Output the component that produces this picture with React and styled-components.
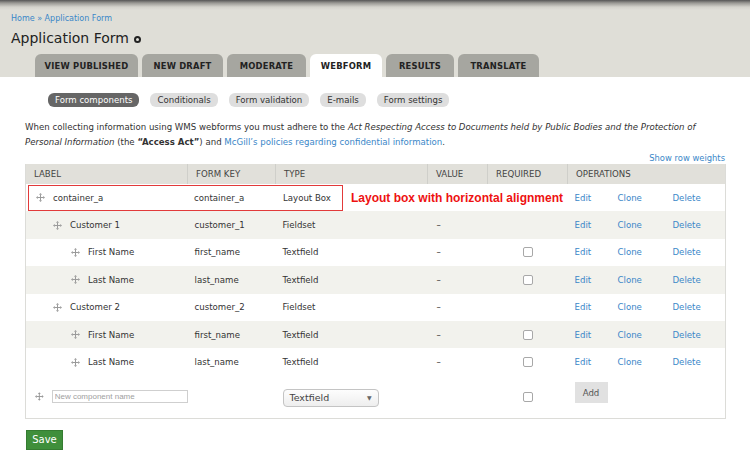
import React from 'react';
import styled, { createGlobalStyle } from 'styled-components';

const GlobalStyle = createGlobalStyle`
	body {
		margin: 0;
		background: #fff;
		font-family: "DejaVu Sans", Verdana, sans-serif;
		color: #333;
	}
`;

const Page = styled.div`
	width: 750px;
	height: 473px;
	overflow: hidden;
`;

const Header = styled.div`
	background: linear-gradient(to bottom, #555 0px, #9a9994 3px, #d4d3cc 7px, #dfded7 10px);
	padding: 13px 0 0 11px;
`;

const Breadcrumb = styled.div`
	font-size: 8px;
	line-height: 12px;
	color: #3a87c8;
`;

const Title = styled.h1`
	display: flex;
	align-items: center;
	gap: 5px;
	margin: 3px 0 0;
	font-size: 14px;
	font-weight: normal;
	line-height: 20px;
	color: #222;
`;

const Ring = styled.span`
	width: 3px;
	height: 3px;
	border: 2px solid #222;
	border-radius: 50%;
	margin-top: 3px;
`;

const Tabs = styled.div`
	display: flex;
	gap: 4px;
	margin-top: 6px;
	padding-left: 24px;
`;

const Tab = styled.div`
	height: 23px;
	display: flex;
	align-items: center;
	justify-content: center;
	box-sizing: border-box;
	border-radius: 6px 6px 0 0;
	background: ${(p) => (p.$active ? '#fff' : '#a6a6a0')};
	font-size: 8.4px;
	font-weight: bold;
	letter-spacing: 0.2px;
	color: #222;
	width: ${(p) => p.$w}px;
`;

const Content = styled.div`
	padding: 0 25px;
`;

const Pills = styled.div`
	display: flex;
	gap: 11px;
	margin-top: 16px;
	padding-left: 23px;
`;

const Pill = styled.div`
	height: 14px;
	padding: 0 7px;
	display: flex;
	align-items: center;
	border-radius: 6px;
	background: ${(p) => (p.$active ? '#666' : '#dedede')};
	color: ${(p) => (p.$active ? '#fff' : '#333')};
	font-size: 8.6px;
`;

const Intro = styled.p`
	margin: 13px 0 0;
	font-size: 8.6px;
	line-height: 15px;
	color: #333;

	em {
		font-style: italic;
	}

	a {
		color: #3a87c8;
		text-decoration: none;
	}
`;

const RowWeights = styled.div`
	text-align: right;
	font-size: 8.4px;
	line-height: 12px;
	margin-top: 2px;
	color: #3a87c8;
`;

const Table = styled.table`
	width: 700px;
	border-collapse: collapse;
	table-layout: fixed;
	border: 1px solid #dcdcd8;
	border-top: 0;
	font-size: 8.6px;
	color: #333;
`;

const Th = styled.th`
	height: 20px;
	padding: 0 0 0 8px;
	background: #e1e0da;
	border-left: 1px solid #cfcfca;
	font-weight: normal;
	text-align: left;
	color: #444;
	&:first-child {
		border-left: 0;
	}
`;

const Tr = styled.tr`
	background: ${(p) => (p.$alt ? '#f2f2ed' : '#fff')};
`;

const Td = styled.td`
	height: ${(p) => p.$h ?? 27.4}px;
	padding: 0 0 0 ${(p) => p.$pl ?? 7}px;
	vertical-align: middle;
	white-space: nowrap;
`;

const LabelCell = styled.div`
	display: flex;
	align-items: center;
	gap: 8px;
	padding-left: ${(p) => p.$level * 18 + 9}px;
`;

const Annotated = styled.div`
	display: flex;
	align-items: center;
`;

const RedBox = styled.div`
	display: flex;
	align-items: center;
	width: 315px;
	height: 26px;
	box-sizing: border-box;
	border: 1.5px solid #e23a3a;
	margin-left: 2px;
`;

const BoxCol = styled.div`
	width: ${(p) => p.$w}px;
	padding-left: ${(p) => p.$pl ?? 0}px;
	box-sizing: border-box;
	display: flex;
	align-items: center;
	gap: 8px;
`;

const Note = styled.span`
	margin-left: 8px;
	font-family: "Liberation Sans", Arial, sans-serif;
	font-size: 12px;
	font-weight: bold;
	color: #ee1111;
`;

const Ops = styled.div`
	display: flex;
	align-items: center;
`;

const OpLink = styled.a`
	width: ${(p) => p.$w}px;
	color: #3a87c8;
	text-decoration: none;
`;

const Check = styled.span`
	display: inline-block;
	width: 8px;
	height: 8px;
	border: 1px solid #a8a8a8;
	border-radius: 2px;
	background: #fff;
	margin-left: 35px;
	margin-top: 2px;
`;

const NameInput = styled.input`
	width: 141px;
	height: 13px;
	box-sizing: border-box;
	border: 1px solid #cfcfcf;
	padding: 0 2px;
	font-family: "Liberation Sans", Arial, sans-serif;
	font-size: 8px;
	color: #999;
	&::placeholder {
		color: #a0a0a0;
	}
`;

const SelectBox = styled.div`
	width: 96px;
	height: 18px;
	box-sizing: border-box;
	border: 1px solid #c4c4c4;
	border-radius: 4px;
	background: linear-gradient(#fdfdfd, #eeeeee);
	display: flex;
	align-items: center;
	justify-content: space-between;
	padding: 0 6px;
	font-size: 9.5px;
	color: #444;
	margin-top: 2px;

	span:last-child {
		font-size: 6px;
		color: #666;
	}
`;

const AddButton = styled.div`
	width: 33px;
	height: 21px;
	background: #e1e1e1;
	color: #555;
	font-size: 8.6px;
	display: flex;
	align-items: center;
	justify-content: center;
	margin-bottom: 8px;
`;

const SaveButton = styled.div`
	width: 37px;
	height: 20px;
	margin: 11px 0 0 1px;
	background: #3f8f3b;
	border: 1px solid #357c31;
	box-sizing: border-box;
	color: #fff;
	font-size: 10px;
	display: flex;
	align-items: center;
	justify-content: center;
`;

const Drag = () => (
	<svg width="9" height="9" viewBox="0 0 9 9" fill="#9a9a9a">
		<rect x="4" y="1.5" width="1" height="6" />
		<rect x="1.5" y="4" width="6" height="1" />
		<path d="M4.5 0 L6 1.8 H3 Z" />
		<path d="M4.5 9 L6 7.2 H3 Z" />
		<path d="M0 4.5 L1.8 3 V6 Z" />
		<path d="M9 4.5 L7.2 3 V6 Z" />
	</svg>
);

const tabs = [
	{ label: 'VIEW PUBLISHED', w: 103 },
	{ label: 'NEW DRAFT', w: 81 },
	{ label: 'MODERATE', w: 79 },
	{ label: 'WEBFORM', w: 72, active: true },
	{ label: 'RESULTS', w: 68 },
	{ label: 'TRANSLATE', w: 81 },
];

const pills = ['Form components', 'Conditionals', 'Form validation', 'E-mails', 'Form settings'];

const rows = [
	{ label: 'Customer 1', key: 'customer_1', type: 'Fieldset', level: 1 },
	{ label: 'First Name', key: 'first_name', type: 'Textfield', level: 2, req: true },
	{ label: 'Last Name', key: 'last_name', type: 'Textfield', level: 2, req: true },
	{ label: 'Customer 2', key: 'customer_2', type: 'Fieldset', level: 1 },
	{ label: 'First Name', key: 'first_name', type: 'Textfield', level: 2, req: true },
	{ label: 'Last Name', key: 'last_name', type: 'Textfield', level: 2, req: true },
];

const Operations = () => (
	<Ops>
		<OpLink $w={43}>Edit</OpLink>
		<OpLink $w={55}>Clone</OpLink>
		<OpLink $w={50}>Delete</OpLink>
	</Ops>
);

const App = () => {
	return (
		<Page>
			<GlobalStyle />
			<Header>
				<Breadcrumb>Home » Application Form</Breadcrumb>
				<Title>
					Application Form <Ring />
				</Title>
				<Tabs>
					{tabs.map((t) => (
						<Tab key={t.label} $w={t.w} $active={t.active}>
							{t.label}
						</Tab>
					))}
				</Tabs>
			</Header>
			<Content>
				<Pills>
					{pills.map((p, i) => (
						<Pill key={p} $active={i === 0}>
							{p}
						</Pill>
					))}
				</Pills>
				<Intro>
					When collecting information using WMS webforms you must adhere to the{' '}
					<em>Act Respecting Access to Documents held by Public Bodies and the Protection of</em>
					<br />
					<em>Personal Information</em> (the <b>“Access Act”</b>) and{' '}
					<a>McGill’s policies regarding confidential information</a>.
				</Intro>
				<RowWeights>Show row weights</RowWeights>
				<Table>
					<colgroup>
						<col style={{ width: 162 }} />
						<col style={{ width: 88 }} />
						<col style={{ width: 152 }} />
						<col style={{ width: 60 }} />
						<col style={{ width: 80 }} />
						<col style={{ width: 158 }} />
					</colgroup>
					<thead>
						<tr>
							<Th>LABEL</Th>
							<Th>FORM KEY</Th>
							<Th>TYPE</Th>
							<Th>VALUE</Th>
							<Th>REQUIRED</Th>
							<Th>OPERATIONS</Th>
						</tr>
					</thead>
					<tbody>
						<Tr>
							<Td colSpan={5} $pl={0}>
								<Annotated>
									<RedBox>
										<BoxCol $w={158} $pl={7}>
											<Drag />
											container_a
										</BoxCol>
										<BoxCol $w={89} $pl={7}>container_a</BoxCol>
										<BoxCol $w={60} $pl={7}>Layout Box</BoxCol>
									</RedBox>
									<Note>Layout box with horizontal alignment</Note>
								</Annotated>
							</Td>
							<Td>
								<Operations />
							</Td>
						</Tr>
						{rows.map((r, i) => (
							<Tr key={i} $alt={i % 2 === 0}>
								<Td $pl={0}>
									<LabelCell $level={r.level}>
										<Drag />
										{r.label}
									</LabelCell>
								</Td>
								<Td>{r.key}</Td>
								<Td>{r.type}</Td>
								<Td $pl={9}>–</Td>
								<Td $pl={0}>{r.req && <Check />}</Td>
								<Td>
									<Operations />
								</Td>
							</Tr>
						))}
						<Tr>
							<Td $pl={0} $h={42}>
								<LabelCell $level={0}>
									<Drag />
									<NameInput placeholder="New component name" />
								</LabelCell>
							</Td>
							<Td />
							<Td>
								<SelectBox>
									<span>Textfield</span>
									<span>▼</span>
								</SelectBox>
							</Td>
							<Td />
							<Td $pl={0}>
								<Check />
							</Td>
							<Td>
								<AddButton>Add</AddButton>
							</Td>
						</Tr>
					</tbody>
				</Table>
				<SaveButton>Save</SaveButton>
			</Content>
		</Page>
	);
};

export default App;
